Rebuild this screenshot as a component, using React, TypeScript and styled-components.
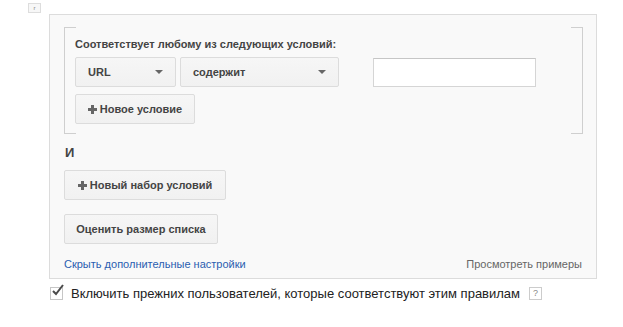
import { FC } from 'react';
import styled, { createGlobalStyle } from 'styled-components';

const GlobalStyle = createGlobalStyle`
  html, body {
    margin: 0;
    padding: 0;
    background: #fff;
    font-family: "Liberation Sans", Arial, sans-serif;
  }
`;

const Page = styled.div`
  position: relative;
  width: 623px;
  height: 327px;
  padding: 14px 0 0 49px;
  box-sizing: border-box;
`;

const BrokenIcon = styled.span`
  position: absolute;
  left: 28px;
  top: 3px;
  width: 11px;
  height: 8px;
  border: 1px solid #ddd;
  background: #f7f7f7;
  font-size: 6px;
  line-height: 8px;
  text-align: center;
  color: #888;
`;

const Panel = styled.div`
  width: 548px;
  height: 265px;
  box-sizing: border-box;
  background: #f9f9f9;
  border: 1px solid #dcdcdc;
  padding: 12px 14px 0 14px;
  display: flex;
  flex-direction: column;
`;

const Bracket = styled.div`
  width: 519px;
  height: 107px;
  box-sizing: border-box;
  border-left: 1px solid #cfcfcf;
  border-right: 1px solid #cfcfcf;
  background:
    linear-gradient(#cfcfcf, #cfcfcf) left top / 11px 1px no-repeat,
    linear-gradient(#cfcfcf, #cfcfcf) left bottom / 11px 1px no-repeat,
    linear-gradient(#cfcfcf, #cfcfcf) right top / 11px 1px no-repeat,
    linear-gradient(#cfcfcf, #cfcfcf) right bottom / 11px 1px no-repeat;
  padding: 11px 10px 0 10px;
  display: flex;
  flex-direction: column;
`;

const Heading = styled.div`
  font-size: 11px;
  font-weight: bold;
  color: #444;
  line-height: 13px;
  height: 19px;
`;

const Row = styled.div`
  display: flex;
  align-items: flex-end;
  gap: 4px;
  margin-bottom: 7px;
`;

const Select = styled.div<{ $w: number }>`
  width: ${p => p.$w}px;
  height: 30px;
  box-sizing: border-box;
  border: 1px solid #dcdcdc;
  border-radius: 2px;
  background: linear-gradient(#f6f6f6, #f1f1f1);
  display: flex;
  align-items: center;
  justify-content: space-between;
  padding: 0 12px 0 12px;
  font-size: 11px;
  font-weight: bold;
  color: #444;
`;

const Arrow = styled.span`
  width: 0;
  height: 0;
  border-left: 4px solid transparent;
  border-right: 4px solid transparent;
  border-top: 4px solid #666;
`;

const TextInput = styled.div`
  width: 163px;
  height: 29px;
  box-sizing: border-box;
  margin-left: 30px;
  background: #fff;
  border: 1px solid #d5d5d5;
  border-top-color: #c6c6c6;
`;

const Button = styled.div<{ $w: number }>`
  width: ${p => p.$w}px;
  height: 30px;
  box-sizing: border-box;
  border: 1px solid #dcdcdc;
  border-radius: 2px;
  background: linear-gradient(#f6f6f6, #f1f1f1);
  display: flex;
  align-items: center;
  justify-content: center;
  gap: 3px;
  font-size: 11px;
  font-weight: bold;
  color: #444;
`;

const Plus = () => (
  <svg width="9" height="9" viewBox="0 0 9 9">
    <path d="M3 0h3v3h3v3H6v3H3V6H0V3h3z" fill="#666" />
  </svg>
);

const AndLabel = styled.div`
  font-size: 13px;
  font-weight: bold;
  color: #444;
  margin: 11px 0 0 1px;
  height: 25px;
`;

const Stack = styled.div`
  display: flex;
  flex-direction: column;
  gap: 14px;
`;

const Footer = styled.div`
  display: flex;
  justify-content: space-between;
  margin-top: 14px;
  font-size: 11px;
`;

const BlueLink = styled.span`
  color: #2a5db0;
`;

const GrayLink = styled.span`
  color: #666;
`;

const CheckRow = styled.div`
  display: flex;
  align-items: center;
  margin-top: 7px;
  margin-left: 1px;
  font-size: 13px;
  color: #222;
`;

const CheckBox = styled.span`
  position: relative;
  width: 11px;
  height: 11px;
  border: 1px solid #c6c6c6;
  margin-right: 8px;
  svg {
    position: absolute;
    left: 0;
    top: -4px;
  }
`;

const Help = styled.span`
  width: 11px;
  height: 11px;
  border: 1px solid #ccc;
  margin-left: 9px;
  font-size: 9px;
  line-height: 11px;
  text-align: center;
  color: #888;
`;

const App: FC = () => {
  return (
    <>
      <GlobalStyle />
      <Page>
        <BrokenIcon>r</BrokenIcon>
        <Panel>
          <Bracket>
            <Heading>Соответствует любому из следующих условий:</Heading>
            <Row>
              <Select $w={101}>
                <span>URL</span>
                <Arrow />
              </Select>
              <Select $w={159}>
                <span>содержит</span>
                <Arrow />
              </Select>
              <TextInput />
            </Row>
            <Button $w={120}>
              <Plus />
              Новое условие
            </Button>
          </Bracket>
          <AndLabel>И</AndLabel>
          <Stack>
            <Button $w={162}>
              <Plus />
              Новый набор условий
            </Button>
            <Button $w={154}>Оценить размер списка</Button>
          </Stack>
          <Footer>
            <BlueLink>Скрыть дополнительные настройки</BlueLink>
            <GrayLink>Просмотреть примеры</GrayLink>
          </Footer>
        </Panel>
        <CheckRow>
          <CheckBox>
            <svg width="13" height="13" viewBox="0 0 13 13">
              <path d="M2 7l3 3 7-9" stroke="#4a4a4a" strokeWidth="2" fill="none" />
            </svg>
          </CheckBox>
          Включить прежних пользователей, которые соответствуют этим правилам
          <Help>?</Help>
        </CheckRow>
      </Page>
    </>
  );
};

export default App;
